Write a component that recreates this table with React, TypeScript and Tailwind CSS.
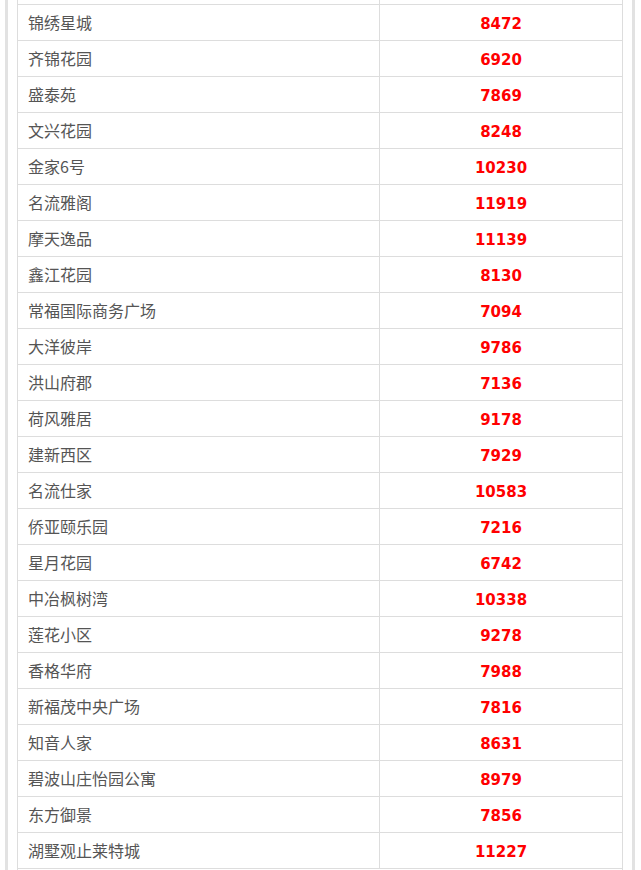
import React from 'react';

const rows: [string, string][] = [
  ['锦绣星城', '8472'],
  ['齐锦花园', '6920'],
  ['盛泰苑', '7869'],
  ['文兴花园', '8248'],
  ['金家6号', '10230'],
  ['名流雅阁', '11919'],
  ['摩天逸品', '11139'],
  ['鑫江花园', '8130'],
  ['常福国际商务广场', '7094'],
  ['大洋彼岸', '9786'],
  ['洪山府郡', '7136'],
  ['荷风雅居', '9178'],
  ['建新西区', '7929'],
  ['名流仕家', '10583'],
  ['侨亚颐乐园', '7216'],
  ['星月花园', '6742'],
  ['中冶枫树湾', '10338'],
  ['莲花小区', '9278'],
  ['香格华府', '7988'],
  ['新福茂中央广场', '7816'],
  ['知音人家', '8631'],
  ['碧波山庄怡园公寓', '8979'],
  ['东方御景', '7856'],
  ['湖墅观止莱特城', '11227'],
];

export default function App() {
  return (
    <div className="flex h-[870px] w-[641px] overflow-hidden bg-white">
      <div className="ml-[5px] w-[3px] shrink-0 bg-[#e2e2e2]" />
      <div className="ml-[9px] w-[606px] shrink-0 border-x border-[#dddddd]">
        <div className="flex h-[5px] border-b border-[#dddddd]">
          <div className="w-[362px] border-r border-[#dddddd]" />
        </div>
        {rows.map(([name, price]) => (
          <div key={name} className="flex h-[36px] border-b border-[#dddddd]">
            <div className="flex w-[362px] items-center border-r border-[#dddddd] pb-[2px] pl-[10px] font-['Noto_Sans_CJK_SC',sans-serif] text-[16px] text-[#555555]">
              {name}
            </div>
            <div className="flex flex-1 items-center justify-center pt-[3px] font-['DejaVu_Sans',sans-serif] text-[15px] font-bold text-[#ff0000]">
              {price}
            </div>
          </div>
        ))}
      </div>
      <div className="ml-[9px] w-[3px] shrink-0 bg-[#e2e2e2]" />
    </div>
  );
}
